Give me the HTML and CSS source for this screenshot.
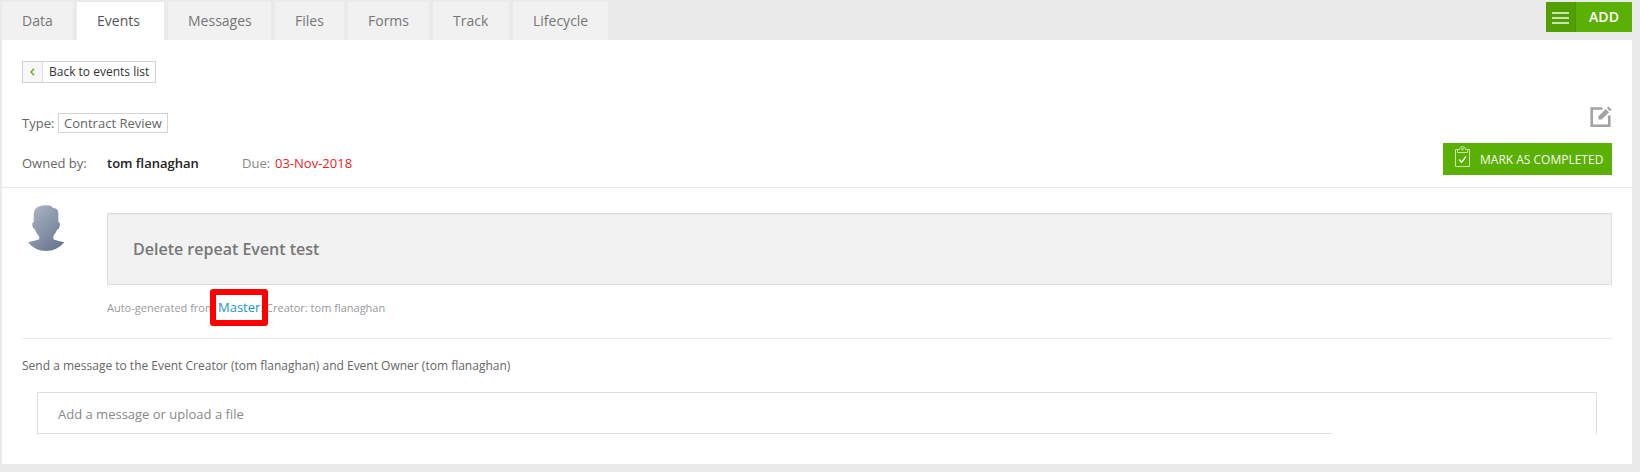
FILE: index.html
```html
<!DOCTYPE html>
<html lang="en">
<head>
<meta charset="utf-8">
<title>Events</title>
<link rel="stylesheet" href="styles.css">
</head>
<body>
<header class="topbar">
  <nav class="tabs">
    <a class="tab tab-data">Data</a>
    <a class="tab tab-events active">Events</a>
    <a class="tab tab-messages">Messages</a>
    <a class="tab tab-files">Files</a>
    <a class="tab tab-forms">Forms</a>
    <a class="tab tab-track">Track</a>
    <a class="tab tab-lifecycle">Lifecycle</a>
  </nav>
  <button class="add">
    <span class="add-menu"><i></i><i></i><i></i></span>
    <span class="add-label">ADD</span>
  </button>
</header>
<main class="panel">
  <section class="summary">
    <a class="back">
      <span class="back-icon"><svg width="5" height="8" viewBox="0 0 5 8"><path d="M4 .8 1 4l3 3.2" fill="none" stroke="#62b01e" stroke-width="1.4"/></svg></span>
      <span class="back-label">Back to events list</span>
    </a>
    <div class="row type-row">
      <span class="type-label">Type:</span>
      <span class="type-value">Contract Review</span>
      <svg class="edit" width="22" height="22" viewBox="0 0 22 22"><path d="M12.5 2.500H1.700V19.800H19.300V9.500" fill="none" stroke="#a3a3a3" stroke-width="2.600"/><path d="M8.500 13.500V10.200L15.700 3l3.300 3.200-7.300 7.300z" fill="#a3a3a3"/><path d="m16.800 2.100 1.700-1.700 3 3.100L20 5.200z" fill="#a3a3a3"/></svg>
    </div>
    <div class="row owner-row">
      <span class="owner-label">Owned by:</span>
      <b class="owner">tom flanaghan</b>
      <span class="due-label">Due:</span>
      <span class="due">03-Nov-2018</span>
      <button class="complete">
        <svg width="16" height="22" viewBox="0 0 16 22"><g fill="none" stroke="#c4e6a0"><path d="M2.500 3.500H.5V20.500H14.500V3.500H12.500"/><path d="M2.500 6.500V3.500H4.500Q4.500 .5 7.500 .5t3 3h2V6.500z"/><circle cx="7.500" cy="3" r="1"/></g><path d="m4.300 13.500 2.200 3L11 10.500" fill="none" stroke="#fff" stroke-width="1.300"/></svg>
        <span>MARK AS COMPLETED</span>
      </button>
    </div>
  </section>
  <section class="event">
    <svg class="avatar" width="38" height="48" viewBox="0 0 38 48">
      <defs><linearGradient id="shade" x1="0" y1="0" x2=".8" y2="1"><stop offset="0" stop-color="#b0bbc8"/><stop offset="1" stop-color="#66748d"/></linearGradient></defs>
      <path fill="url(#shade)" d="M6.700 17.700V10Q7 4.500 11.500 2.500Q18 .5 24 1.700L26 4Q31 4 31.300 8.500V17.700Q33.800 19 32.600 22.500Q32.200 25 30.200 25.500Q28.500 29.500 26.300 32V35.300Q30 37 37.300 38.300Q30 47 19 47Q8 47 1 38.300Q8 37 12.300 35.300V32.700Q9 29 8 25.500Q5.800 25 5.500 22Q4.600 19 6.700 17.700Z"/>
    </svg>
    <div class="event-body">
      <h1 class="title">Delete repeat Event test</h1>
      <p class="meta"><span class="generated">Auto-generated from</span><span class="master">Master<span class="marker"></span></span><span class="creator">. Creator: tom flanaghan</span></p>
    </div>
  </section>
  <section class="message">
    <p class="send">Send a message to the Event Creator (tom flanaghan) and Event Owner (tom flanaghan)</p>
    <div class="input"><span class="placeholder">Add a message or upload a file</span></div>
  </section>
</main>
</body>
</html>
```
FILE: styles.css
```css
* { box-sizing: border-box; }
body { margin: 0; padding: 2px 8px 8px 2px; height: 472px; background: #eaeaea; font-family: "Open Sans", sans-serif; font-size: 13px; color: #666; overflow: hidden; }
button { border: 0; padding: 0; font: inherit; }
h1, p { margin: 0; }
.topbar { display: flex; justify-content: space-between; align-items: flex-start; height: 38px; }
.tabs { display: flex; gap: 4px; }
.tab { height: 38px; padding-left: 20px; background: #f1f1f1; color: #777; font-size: 14px; line-height: 37px; white-space: nowrap; }
.tab.active { background: #fff; color: #555; }
.tab-data { width: 71px; }
.tab-events { width: 87px; }
.tab-messages { width: 103px; }
.tab-files { width: 69px; }
.tab-forms { width: 81px; }
.tab-track { width: 76px; }
.tab-lifecycle { width: 95px; }
.add { display: flex; width: 86px; height: 30px; background: #5bb005; color: #fff; }
.add-menu { display: flex; flex-direction: column; gap: 3px; width: 30px; height: 30px; padding: 10px 6px 0; background: #529f04; border-right: 1px solid #4c9404; }
.add-menu i { height: 2px; background: #cbe2b3; }
.add-label { flex: 1; font-size: 14px; font-weight: 600; line-height: 30px; text-align: center; }
.panel { height: 424px; background: #fff; }
.summary { height: 148px; padding: 21px 20px 0; border-bottom: 1px solid #e8e8e8; }
.back { display: flex; width: 134px; height: 22px; border: 1px solid #d3d3d3; color: #333; font-size: 12px; line-height: 19px; white-space: nowrap; }
.back-icon { display: flex; align-items: center; justify-content: center; width: 20px; background: #f7f7f7; border-right: 1px solid #e0e0e0; }
.back-label { padding-left: 6px; }
.row { display: flex; white-space: nowrap; }
.type-row { height: 52px; padding-top: 22px; }
.type-label { width: 36px; padding-top: 8px; line-height: 20px; }
.type-value { width: 110px; height: 20px; margin-top: 8px; padding-left: 5px; border: 1px solid #d3d3d3; line-height: 18px; }
.edit { margin-left: auto; margin-top: 1px; }
.owner-row { height: 40px; padding-top: 8px; line-height: 40px; }
.owner-label { width: 85px; }
.owner { width: 135px; color: #222; font-weight: 600; }
.due-label { width: 33px; color: #888; }
.due { color: #ed1c24; }
.complete { display: flex; width: 169px; height: 32px; margin-left: auto; padding: 3px 0 0 12px; background: #5bb005; color: #f4faee; font-size: 12px; line-height: 27px; }
.complete span { margin-left: 9px; }
.event { display: flex; height: 151px; margin: 0 20px; padding-top: 16px; border-bottom: 1px solid #e8e8e8; }
.avatar { margin-left: 5px; }
.event-body { flex: 1; margin-left: 42px; padding-top: 9px; }
.title { height: 72px; padding-left: 25px; background: #f2f2f2; border: 1px solid #ddd; color: #777; font-size: 16px; font-weight: 600; line-height: 70px; box-shadow: inset 0 1px 1px #e6e6e6; }
.meta { display: flex; padding-top: 12px; color: #999; font-size: 11px; line-height: 22px; white-space: nowrap; }
.generated { width: 111px; }
.master { position: relative; color: #1c94d2; font-size: 13px; line-height: 20px; }
.marker { position: absolute; left: -8px; top: -8px; width: 58px; height: 37px; border: 6px solid #f00; border-radius: 3px; }
.message { padding: 17px 35px 0; }
.send { margin-left: -15px; font-size: 12px; line-height: 20px; white-space: nowrap; }
.input { height: 42px; margin-top: 16px; padding-left: 20px; border: 1px solid #ddd; border-bottom: 0; background: linear-gradient(#ddd, #ddd) 0 100% / 1294px 1px no-repeat; color: #888; line-height: 42px; }
```
